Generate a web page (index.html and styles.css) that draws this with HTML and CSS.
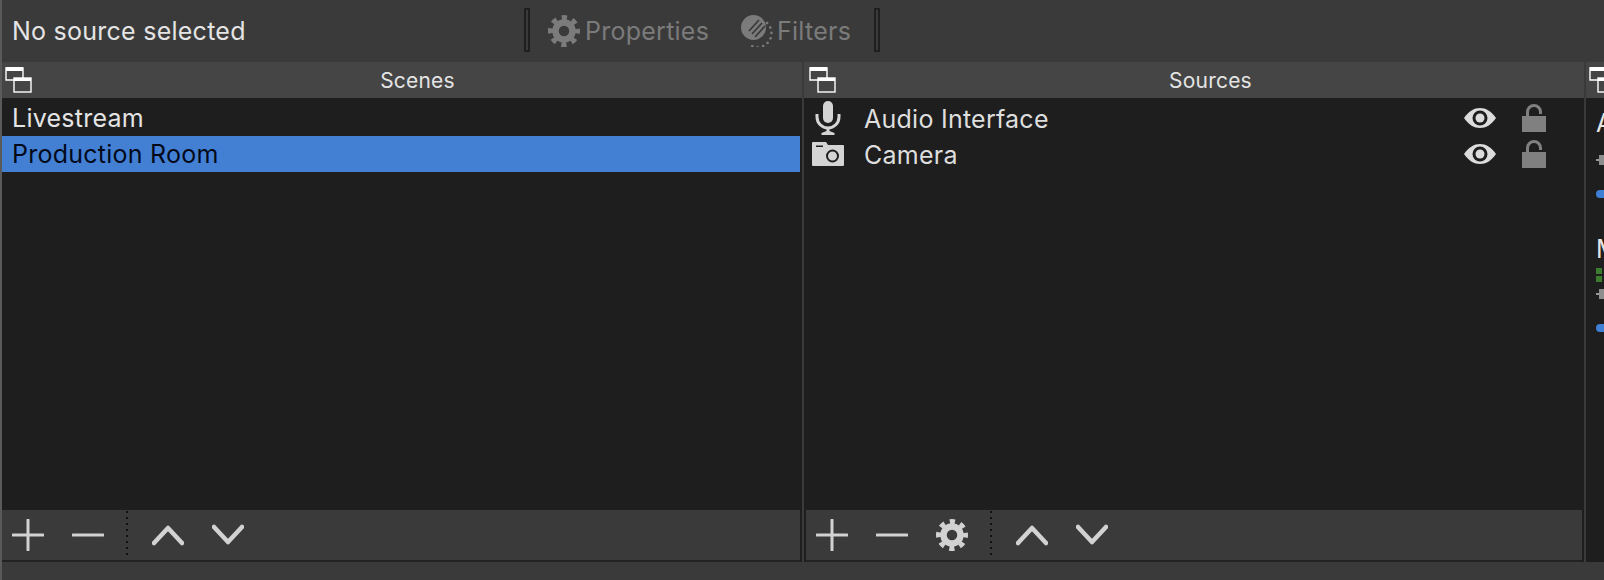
FILE: index.html
```html
<!DOCTYPE html>
<html lang="en">
<head>
    <meta charset="UTF-8">
    <title>OBS Studio docks</title>
    <link rel="stylesheet" href="styles.css">
</head>
<body>
<svg class="defs" width="0" height="0">
    <symbol id="i-float" viewBox="0 0 28 28">
        <path d="M1 2h17v12H1z" fill="none" stroke="currentColor" stroke-width="1.4"/>
        <rect x="1" y="1" width="17" height="4" fill="currentColor"/>
        <rect x="9" y="12" width="17" height="14" fill="#454545" stroke="currentColor" stroke-width="1.4"/>
        <rect x="9" y="12" width="17" height="3" fill="currentColor"/>
    </symbol>
    <symbol id="i-gear" viewBox="0 0 32 32">
        <circle cx="16" cy="16" r="8.5" fill="none" stroke="currentColor" stroke-width="6.5"/>
        <circle cx="16" cy="16" r="13.5" fill="none" stroke="currentColor" stroke-width="5" stroke-dasharray="5.2 5.4" stroke-dashoffset="2.6"/>
    </symbol>
    <symbol id="i-filter" viewBox="0 0 32 32">
        <circle cx="12.500" cy="12.500" r="12.500" fill="currentColor"/>
        <path d="M11 19L21 8M14 22L24 11M8 16L18 5M8 27L26 27" stroke="#3a3a3a" stroke-width="1.8"/>
        <path d="M26 8A13.500 13.500 0 1 1 7 28.500" fill="none" stroke="currentColor" stroke-width="2.6" stroke-linecap="round" stroke-dasharray="0.1 5.400"/>
    </symbol>
    <symbol id="i-mic" viewBox="0 0 26 34">
        <rect x="8" y="0" width="10" height="22" rx="5" fill="currentColor"/>
        <path d="M2 13v3a11 11 0 0 0 22 0v-3" fill="none" stroke="currentColor" stroke-width="3"/>
        <path d="M11.500 26h3v4l5 2v2H6.500v-2l5-2z" fill="currentColor"/>
    </symbol>
    <symbol id="i-camera" viewBox="0 0 32 24">
        <path d="M1 0h13l2 3h15a1 1 0 0 1 1 1v19a1 1 0 0 1-1 1H1a1 1 0 0 1-1-1V1a1 1 0 0 1 1-1z" fill="currentColor"/>
        <rect x="4" y="3.500" width="7" height="1.500" fill="#1e1e1e"/>
        <circle cx="20.500" cy="14" r="5.500" fill="none" stroke="#1e1e1e" stroke-width="2"/>
    </symbol>
    <symbol id="i-eye" viewBox="0 0 32 20">
        <path d="M0 10C5 3 10 0 16 0s11 3 16 10c-5 7-10 10-16 10S5 17 0 10z" fill="currentColor"/>
        <circle cx="16" cy="10" r="7.500" fill="#1e1e1e"/>
        <circle cx="16" cy="10" r="4.500" fill="currentColor"/>
    </symbol>
    <symbol id="i-lock" viewBox="0 0 24 28">
        <rect x="0" y="12" width="24" height="16" fill="currentColor"/>
        <path d="M5.500 12V8a6.500 6.500 0 0 1 13 0v2" fill="none" stroke="currentColor" stroke-width="3"/>
    </symbol>
    <symbol id="i-plus" viewBox="0 0 32 32">
        <path d="M16 1v30M1 16h30" stroke="currentColor" stroke-width="3" stroke-linecap="round"/>
    </symbol>
    <symbol id="i-minus" viewBox="0 0 32 32">
        <path d="M1 16h30" stroke="currentColor" stroke-width="3" stroke-linecap="round"/>
    </symbol>
    <symbol id="i-up" viewBox="0 0 32 32">
        <path d="M2 24L16 9l14 15" fill="none" stroke="currentColor" stroke-width="4.5" stroke-linecap="round" stroke-linejoin="round"/>
    </symbol>
    <symbol id="i-down" viewBox="0 0 32 32">
        <path d="M2 8l14 15L30 8" fill="none" stroke="currentColor" stroke-width="4.5" stroke-linecap="round" stroke-linejoin="round"/>
    </symbol>
</svg>

<div class="app">
    <div class="topbar">
        <span class="status">No source selected</span>
        <span class="handle handle-first"></span>
        <span class="tool tool-props"><svg class="ico-gear"><use href="#i-gear"/></svg>Properties</span>
        <span class="tool tool-filters"><svg class="ico-filter"><use href="#i-filter"/></svg>Filters</span>
        <span class="handle handle-last"></span>
    </div>

    <div class="docks">
        <section class="dock dock-scenes">
            <header class="dock-title">
                <svg class="ico-float"><use href="#i-float"/></svg>
                <span class="dock-name">Scenes</span>
            </header>
            <ul class="list">
                <li class="row">Livestream</li>
                <li class="row selected">Production Room</li>
            </ul>
            <div class="toolbar">
                <button class="btn"><svg><use href="#i-plus"/></svg></button>
                <button class="btn"><svg><use href="#i-minus"/></svg></button>
                <span class="dots"></span>
                <button class="btn"><svg><use href="#i-up"/></svg></button>
                <button class="btn"><svg><use href="#i-down"/></svg></button>
            </div>
        </section>

        <div class="splitter"></div>

        <section class="dock dock-sources">
            <header class="dock-title">
                <svg class="ico-float"><use href="#i-float"/></svg>
                <span class="dock-name">Sources</span>
            </header>
            <ul class="list">
                <li class="row source">
                    <svg class="ico-mic"><use href="#i-mic"/></svg>
                    <span class="source-name">Audio Interface</span>
                    <svg class="ico-eye"><use href="#i-eye"/></svg>
                    <svg class="ico-lock"><use href="#i-lock"/></svg>
                </li>
                <li class="row source">
                    <svg class="ico-camera"><use href="#i-camera"/></svg>
                    <span class="source-name">Camera</span>
                    <svg class="ico-eye"><use href="#i-eye"/></svg>
                    <svg class="ico-lock"><use href="#i-lock"/></svg>
                </li>
            </ul>
            <div class="toolbar">
                <button class="btn"><svg><use href="#i-plus"/></svg></button>
                <button class="btn"><svg><use href="#i-minus"/></svg></button>
                <button class="btn"><svg><use href="#i-gear"/></svg></button>
                <span class="dots"></span>
                <button class="btn"><svg><use href="#i-up"/></svg></button>
                <button class="btn"><svg><use href="#i-down"/></svg></button>
            </div>
        </section>

        <div class="splitter"></div>

        <section class="dock dock-mixer">
            <header class="dock-title">
                <svg class="ico-float"><use href="#i-float"/></svg>
            </header>
            <div class="mixer">
                <div class="channel">
                    <div class="channel-name">Audio Interface</div>
                    <div class="meter meter-idle"></div>
                    <div class="fader"><span class="knob"></span></div>
                    <div class="volume"></div>
                </div>
                <div class="channel">
                    <div class="channel-name">Mic/Aux</div>
                    <div class="meter"><i></i><i></i></div>
                    <div class="fader"><span class="knob"></span></div>
                    <div class="volume"></div>
                </div>
            </div>
        </section>
    </div>
</div>
</body>
</html>
```

FILE: styles.css
```css
/* Global */
html, body {
    margin: 0;
    padding: 0;
    height: 580px;
    overflow: hidden;
    background-color: #3a3a3a;
}

.defs {
    position: absolute;
}

.app {
    width: 1604px;
    height: 580px;
    box-sizing: border-box;
    border-left: 2px solid #5a5a5a;
    font-family: 'Inter', 'Liberation Sans', sans-serif;
    color: #e4e4e4;
    overflow: hidden;
}

/* Top bar */
.topbar {
    display: flex;
    align-items: center;
    height: 62px;
    font-size: 25px;
    letter-spacing: 0.25px;
    white-space: nowrap;
}

.status {
    margin-left: 10px;
    width: 512px;
}

.handle {
    box-sizing: border-box;
    width: 6px;
    height: 44px;
    border: 2px solid #1f1f1f;
    margin-top: -2px;
}

.tool {
    display: flex;
    align-items: center;
    color: #7b7b7b;
}

.tool-props {
    width: 193px;
    margin-left: 18px;
    gap: 5px;
}

.tool-filters {
    width: 133px;
    gap: 4px;
}

.ico-gear {
    width: 32px;
    height: 32px;
}

.ico-filter {
    width: 32px;
    height: 32px;
}

/* Docks */
.docks {
    display: flex;
    height: 500px;
}

.dock {
    display: flex;
    flex-direction: column;
    background-color: #1e1e1e;
}

.dock-scenes {
    width: 800px;
}

.dock-sources {
    width: 780px;
}

.dock-mixer {
    flex: 1;
    overflow: hidden;
}

.splitter {
    width: 2px;
    background-color: #3a3a3a;
}

.dock-title {
    display: flex;
    align-items: center;
    height: 36px;
    padding-left: 3px;
    background-color: #454545;
    flex-shrink: 0;
}

.dock-sources .dock-title {
    padding-left: 5px;
}

.ico-float {
    width: 28px;
    height: 28px;
    color: #fff;
    flex-shrink: 0;
}

.dock-name {
    flex: 1;
    text-align: center;
    font-size: 21px;
    letter-spacing: 0.2px;
}

/* Lists */
.list {
    flex: 1;
    list-style: none;
    margin: 0;
    padding: 2px 0 0;
    font-size: 25px;
    letter-spacing: 0.25px;
}

.row {
    display: flex;
    align-items: center;
    height: 36px;
    padding-left: 10px;
    margin-right: 2px;
}

.selected {
    background-color: #4380d3;
    color: #020a1a;
}

.source {
    padding-left: 0;
    margin-right: 0;
    color: #dedede;
}

.source-name {
    flex: 1;
    padding-top: 2px;
}

.ico-mic {
    width: 26px;
    height: 34px;
    margin-left: 11px;
    flex-shrink: 0;
    color: #d4d4d4;
}

.ico-camera {
    width: 32px;
    height: 24px;
    margin-left: 8px;
    flex-shrink: 0;
    color: #d4d4d4;
}

.ico-mic + .source-name {
    margin-left: 23px;
}

.ico-camera + .source-name {
    margin-left: 20px;
}

.ico-eye {
    width: 32px;
    height: 20px;
    color: #dcdcdc;
}

.ico-lock {
    width: 24px;
    height: 28px;
    margin-left: 26px;
    margin-right: 38px;
    color: #808080;
}

/* Bottom toolbars */
.toolbar {
    display: flex;
    align-items: center;
    gap: 20px;
    height: 50px;
    margin-right: 2px;
    padding-left: 6px;
    background-color: #3a3a3a;
    border-bottom: 2px solid #222;
    flex-shrink: 0;
}

.dock-sources .toolbar {
    margin-left: 2px;
    padding-left: 6px;
}

.btn {
    width: 40px;
    height: 32px;
    padding: 0;
    border: 0;
    background: none;
    color: #d2d2d2;
    display: flex;
    justify-content: center;
}

.btn svg {
    width: 32px;
    height: 32px;
}

.dots {
    width: 2px;
    height: 46px;
    margin-left: -2px;
    margin-top: -3px;
    background: repeating-linear-gradient(to bottom, #111 0, #111 2px, transparent 2px, transparent 6px);
}

/* Mixer, cut off by the window edge */
.mixer {
    padding: 10px 0 0 10px;
    white-space: nowrap;
    font-size: 25px;
}

.channel {
    height: 126px;
}

.channel-name {
    height: 30px;
    line-height: 30px;
}

.meter {
    box-sizing: border-box;
    height: 18px;
    padding-top: 4px;
    display: flex;
    flex-direction: column;
    gap: 2px;
}

.meter-idle {
    height: 10px;
}

.meter i {
    display: block;
    width: 6px;
    height: 6px;
    background-color: #3c7c2e;
}

.fader {
    height: 24px;
    display: flex;
    align-items: center;
}

.fader::before {
    content: "";
    width: 5px;
    height: 2px;
    background-color: #9a9a9a;
}

.knob {
    width: 8px;
    height: 10px;
    background-color: #8e8e8e;
}

.volume {
    width: 20px;
    height: 8px;
    margin-top: 18px;
    border-radius: 4px;
    background-color: #3f7fd6;
}
```
